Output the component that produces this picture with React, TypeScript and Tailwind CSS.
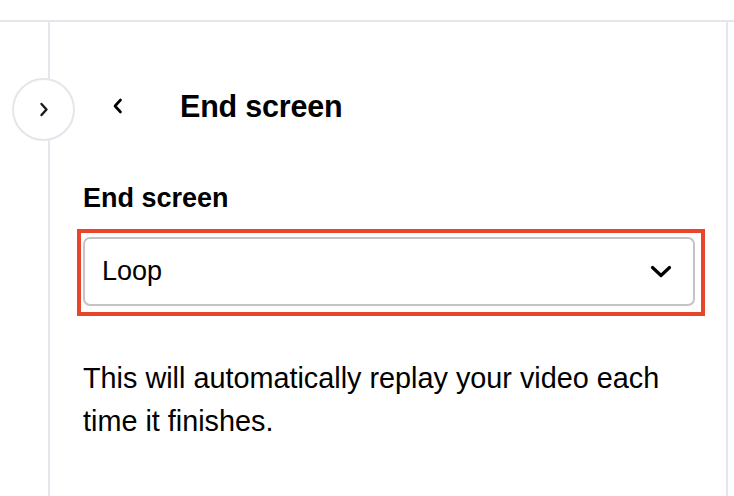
export default function App() {
  return (
    <div
      className="h-[496px] w-[734px] overflow-hidden bg-white text-black"
      style={{ fontFamily: '"Liberation Sans", Arial, sans-serif' }}
    >
      <div className="h-[22px] border-b-2 border-[#e3e6ea]" />
      <div className="relative ml-[48px] mr-[6px] h-[474px] border-x-2 border-[#e3e6ea]">
        {/* collapse toggle */}
        <button className="absolute left-[-38px] top-[56px] flex h-[63px] w-[63px] items-center justify-center rounded-full border-2 border-[#e3e6ea] bg-white">
          <svg width="10" height="15" viewBox="0 0 10 15" fill="none">
            <path d="M2.5 2l5 5.5-5 5.5" stroke="#1a1a1a" strokeWidth="2.4" strokeLinecap="round" strokeLinejoin="round" />
          </svg>
        </button>

        <div className="pl-[33px] pr-[31px] pt-[54px]">
          {/* header */}
          <div className="flex h-[60px] items-center">
            <button className="ml-[27px] flex h-[20px] w-[14px] items-center justify-center">
              <svg width="11" height="16" viewBox="0 0 11 16" fill="none">
                <path d="M8.5 2L3 8l5.5 6" stroke="#000" strokeWidth="2.6" strokeLinecap="round" strokeLinejoin="round" />
              </svg>
            </button>
            <h1 className="ml-[56px] text-[30.5px] font-bold leading-none tracking-[-0.2px]">End screen</h1>
          </div>

          {/* field */}
          <label className="mt-[46px] block text-[27px] font-bold leading-[32px]">End screen</label>
          <div className="-ml-[6px] -mr-[10px] mt-[15px] border-[4px] border-[#e9452c] pb-[6px] pl-[2px] pr-[6px] pt-[4px]">
            <div className="flex h-[69px] items-center justify-between rounded-[7px] border-2 border-[#c4c4c4] bg-white pl-[17px] pr-[21px]">
              <span className="text-[27px] leading-none">Loop</span>
              <svg width="22" height="13" viewBox="0 0 22 13" fill="none">
                <path d="M2.5 2.5l8.5 8 8.5-8" stroke="#000" strokeWidth="3.2" strokeLinecap="round" strokeLinejoin="round" />
              </svg>
            </div>
          </div>

          <p className="mt-[41px] text-[28.8px] leading-[43px]">
            This will automatically replay your video each time it finishes.
          </p>
        </div>
      </div>
    </div>
  );
}
